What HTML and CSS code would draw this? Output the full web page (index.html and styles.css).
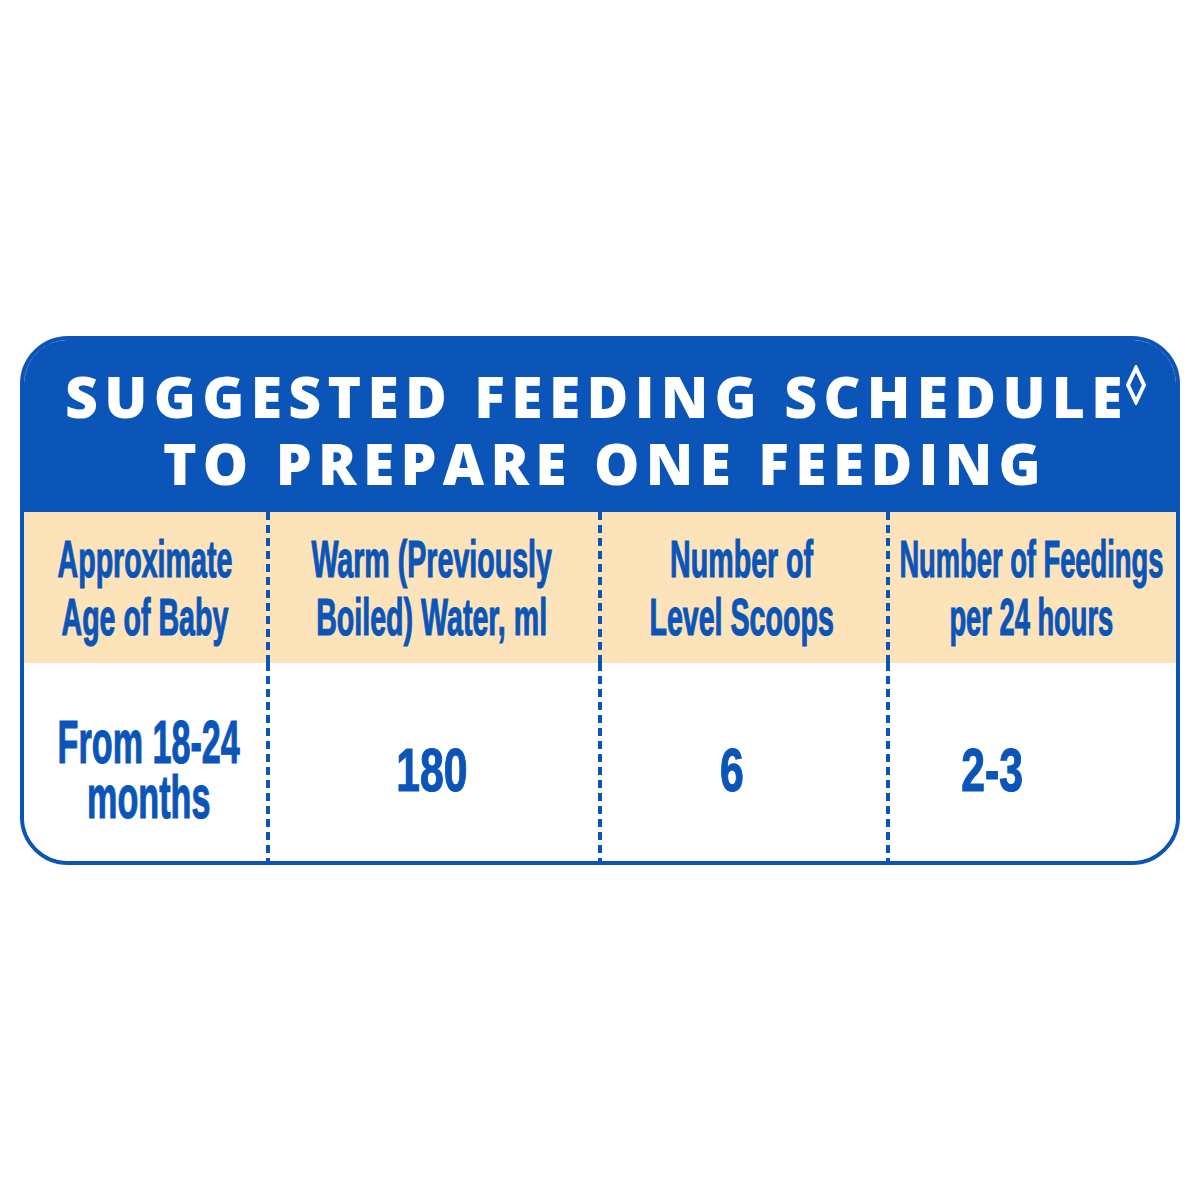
FILE: index.html
```html
<!DOCTYPE html>
<html>
<head>
<meta charset="utf-8">
<link rel="stylesheet" href="styles.css">
</head>
<body>
<div class="card">
  <div class="head">
    <div class="title">SUGGESTED FEEDING SCHEDULE<svg class="dia" width="22" height="40" viewBox="0 0 22 40"><path d="M11 3 L19 20 L11 37 L3 20 Z" fill="none" stroke="#fff" stroke-width="4" stroke-linejoin="miter"/></svg></div>
    <div class="title t2">TO PREPARE ONE FEEDING</div>
  </div>
  <div class="grid">
    <div class="cell th c1"><span class="txt">Approximate<br>Age of Baby</span></div>
    <div class="cell th c2 dash"><span class="txt">Warm (Previously<br>Boiled) Water, ml</span></div>
    <div class="cell th c3 dash"><span class="txt">Number of<br>Level Scoops</span></div>
    <div class="cell th c4 dash"><span class="txt narrow">Number of Feedings<br>per 24 hours</span></div>
    <div class="cell td c1 v1"><span class="txt">From 18-24<br>months</span></div>
    <div class="cell td c2 dash"><span class="num">180</span></div>
    <div class="cell td c3 dash v3"><span class="num">6</span></div>
    <div class="cell td c4 dash v4"><span class="num">2-3</span></div>
  </div>
</div>
</body>
</html>
```
FILE: styles.css
```css
html, body {
  margin: 0;
  padding: 0;
  background: #ffffff;
}
body {
  width: 1200px;
  height: 1200px;
  overflow: hidden;
}
.card {
  box-sizing: border-box;
  width: 1160px;
  height: 529px;
  margin: 336px 0 0 20px;
  border: 4px solid #0b55b8;
  border-radius: 48px;
  overflow: hidden;
  background: #ffffff;
  display: flex;
  flex-direction: column;
}
.head {
  box-sizing: border-box;
  height: 172px;
  flex: none;
  background: #0b55b8;
  padding-top: 23px;
  display: flex;
  flex-direction: column;
  align-items: center;
}
.title {
  font-family: "Open Sans", "Liberation Sans", sans-serif;
  font-weight: 800;
  font-size: 57px;
  line-height: 67px;
  color: #ffffff;
  letter-spacing: 6.3px;
  white-space: nowrap;
  padding-left: 12px;
}
.t2 {
  padding-left: 10px;
}
.dia {
  vertical-align: top;
  margin-top: 2px;
  margin-left: -4px;
}
.grid {
  flex: 1;
  display: grid;
  grid-template-columns: 242px 332px 288px 290px;
  grid-template-rows: 151px 1fr;
}
.cell {
  min-width: 0;
  overflow: visible;
  display: flex;
  justify-content: center;
  align-items: center;
  font-family: "Liberation Sans", Arial, sans-serif;
  font-weight: 700;
  color: #0b55b8;
  white-space: nowrap;
  text-align: center;
}
.th {
  background-color: #fde3b9;
}
.td {
  background-color: #ffffff;
  padding-top: 16px;
}
.dash {
  background-image: repeating-linear-gradient(to bottom, #0b55b8 0 8px, transparent 8px 13px);
  background-size: 4px 100%;
  background-position: 0 0;
  background-repeat: no-repeat;
}
.txt, .num {
  display: inline-block;
  -webkit-text-stroke: 1.2px #0b55b8;
}
.th .txt {
  font-size: 52px;
  line-height: 58px;
  transform: scaleX(0.55);
}
.th .txt.narrow {
  transform: scaleX(0.525);
}
.td .txt {
  font-size: 61px;
  line-height: 55px;
  transform: scaleX(0.56);
}
.num {
  font-size: 61px;
  line-height: 55px;
  transform: scaleX(0.7);
}
.v1 {
  padding-left: 8px;
}
.v3 {
  padding-right: 20px;
}
.v4 {
  padding-right: 78px;
}
```
